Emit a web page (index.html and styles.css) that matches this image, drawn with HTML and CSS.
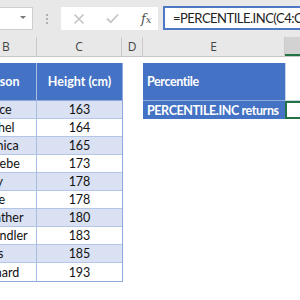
FILE: index.html
```html
<!DOCTYPE html>
<html lang="en">

<head>
  <meta charset="UTF-8" />
  <title>PERCENTILE.INC</title>
  <link rel="stylesheet" href="styles.css">
</head>

<body>

  <!-- Formula bar -->
  <div class="toolbar">
    <div class="namebox"><span class="arrow"></span></div>
    <div class="grip"><i></i><i></i><i></i></div>
    <div class="func-buttons">
      <svg class="icon" width="12" height="12" viewBox="0 0 12 12">
        <path d="M1.5 1.5 L10.5 10.5 M10.5 1.5 L1.5 10.5" stroke="#c4c4c4" stroke-width="1.6" fill="none" />
      </svg>
      <svg class="icon" width="13" height="11" viewBox="0 0 13 11">
        <path d="M1 5.5 L4.8 9.3 L12 1.5" stroke="#c4c4c4" stroke-width="1.8" fill="none" />
      </svg>
      <span class="fx">f<small>x</small></span>
    </div>
    <div class="formula">=PERCENTILE.INC(C4:C13,0.5)</div>
  </div>

  <!-- Column headers -->
  <div class="colheads">
    <div class="colhead col-b">B</div>
    <div class="colhead col-c">C</div>
    <div class="colhead col-d">D</div>
    <div class="colhead col-e">E</div>
    <div class="colhead col-f selected">F</div>
  </div>

  <!-- Sheet -->
  <div class="sheet">
    <div class="table heights">
      <div class="th name">Person</div>
      <div class="th num">Height (cm)</div>

      <div class="td name band">Janice</div><div class="td num band">163</div>
      <div class="td name">Rachel</div><div class="td num">164</div>
      <div class="td name band">Monica</div><div class="td num band">165</div>
      <div class="td name">Phoebe</div><div class="td num">173</div>
      <div class="td name band">Joey</div><div class="td num band">178</div>
      <div class="td name">Mike</div><div class="td num">178</div>
      <div class="td name band">Gunther</div><div class="td num band">180</div>
      <div class="td name">Chandler</div><div class="td num">183</div>
      <div class="td name band">Ross</div><div class="td num band">185</div>
      <div class="td name">Richard</div><div class="td num">193</div>
    </div>

    <div class="gap-col"></div>

    <div class="table result">
      <div class="rh top">Percentile</div>
      <div class="rv top"></div>
      <div class="rh">PERCENTILE.INC returns</div>
      <div class="rv active"></div>
    </div>
  </div>

</body>

</html>
```

FILE: styles.css
```css
body {
  margin: 0;
  width: 300px;
  height: 300px;
  overflow: hidden;
  background: #fff;
  font-family: Lato, "Liberation Sans", sans-serif;
}

/* Formula bar */
.toolbar {
  display: flex;
  align-items: flex-start;
  height: 37px;
  padding-top: 6px;
  box-sizing: border-box;
  background-color: #e8e8e8;
}

.namebox {
  width: 33px;
  height: 23px;
  margin-top: 1px;
  background: #fff;
  border: 1px solid #cfcfcf;
  border-left: none;
  box-sizing: border-box;
  display: flex;
  align-items: center;
  justify-content: flex-end;
  padding-right: 6px;
}

.arrow {
  width: 0;
  height: 0;
  border-left: 3px solid transparent;
  border-right: 3px solid transparent;
  border-top: 3px solid #777;
  margin-top: -2px;
}

.grip {
  width: 28px;
  height: 23px;
  display: flex;
  flex-direction: column;
  align-items: center;
  justify-content: center;
  gap: 2px;
  margin-top: 1px;
}

.grip i {
  width: 2px;
  height: 2px;
  background: #b0b0b0;
}

.func-buttons {
  width: 97px;
  height: 23px;
  margin-top: 1px;
  background: #fff;
  display: flex;
  align-items: center;
  padding-left: 12px;
  box-sizing: border-box;
}

.icon + .icon {
  margin-left: 21px;
}

.fx {
  margin-left: 22px;
  font-family: "DejaVu Serif", serif;
  font-style: italic;
  font-size: 13px;
  color: #555;
}

.fx small {
  font-size: 10px;
}

.formula {
  flex: 1;
  min-width: 0;
  margin-left: 5px;
  height: 24px;
  border: 2px solid #4b79c6;
  border-right: none;
  background: #fff;
  box-sizing: border-box;
  padding-left: 8px;
  font-size: 13px;
  letter-spacing: -0.5px;
  line-height: 20px;
  color: #222;
  white-space: nowrap;
  overflow: hidden;
}

/* Column headers */
.colheads {
  display: flex;
  margin-left: -24px;
  height: 19px;
  background-color: #e8e8e8;
  border-bottom: 1px solid #c6c6c6;
  font-family: "Open Sans", sans-serif;
  font-size: 12px;
  color: #444;
}

.colhead {
  flex: none;
  display: flex;
  align-items: center;
  justify-content: center;
  border-right: 1px solid #cacaca;
  box-sizing: border-box;
}

.col-b { width: 61px; }
.col-c { width: 85px; }
.col-d { width: 21px; }
.col-e { width: 142px; }

.col-f {
  width: 64px;
  border-right: none;
}

.colhead.selected {
  background-color: #d2d2d2;
  border-bottom: 2px solid #217346;
  color: #217346;
}

/* Sheet */
.sheet {
  display: flex;
  align-items: flex-start;
  margin-left: -24px;
  padding-top: 6px;
  font-size: 12.5px;
  color: #111;
}

.table {
  display: grid;
  flex: none;
}

.heights {
  grid-template-columns: 61px 85px;
  grid-auto-rows: 18px;
  grid-template-rows: 38px;
  border-right: 1px solid #8ea9db;
  border-bottom: 1px solid #8ea9db;
  margin-right: -1px;
}

.th {
  background-color: #4472c4;
  color: #fff;
  font-weight: 700;
  display: flex;
  align-items: center;
  border-bottom: 1px solid #8ea9db;
}

.th.name {
  padding-left: 5px;
}

.td {
  display: flex;
  align-items: center;
  border-bottom: 1px solid #b4c6e7;
}

.heights div {
  box-sizing: border-box;
}

.name {
  padding-left: 2px;
  border-right: 1px solid #a9bee4;
  white-space: nowrap;
  overflow: hidden;
}

.num {
  justify-content: center;
}

.band {
  background-color: #d9e1f2;
}

.heights .td:nth-last-child(-n+2) {
  border-bottom: none;
}

.gap-col {
  flex: none;
  width: 21px;
}

.result {
  grid-template-columns: 142px 30px;
  grid-template-rows: 38px 18px;
}

.result div {
  box-sizing: border-box;
}

.rh {
  background-color: #4472c4;
  color: #fff;
  font-weight: 700;
  display: flex;
  align-items: center;
  padding-left: 4px;
  letter-spacing: -0.4px;
  white-space: nowrap;
  overflow: hidden;
}

.rh.top {
  border-bottom: 1px solid #8ea9db;
}

.rv {
  background: #fff;
}

.rv.top {
  border-bottom: 1px solid #c9d3e6;
  border-left: 1px solid #c9d3e6;
}

.rv.active {
  border: 2px solid #217346;
  border-right: none;
}
```
